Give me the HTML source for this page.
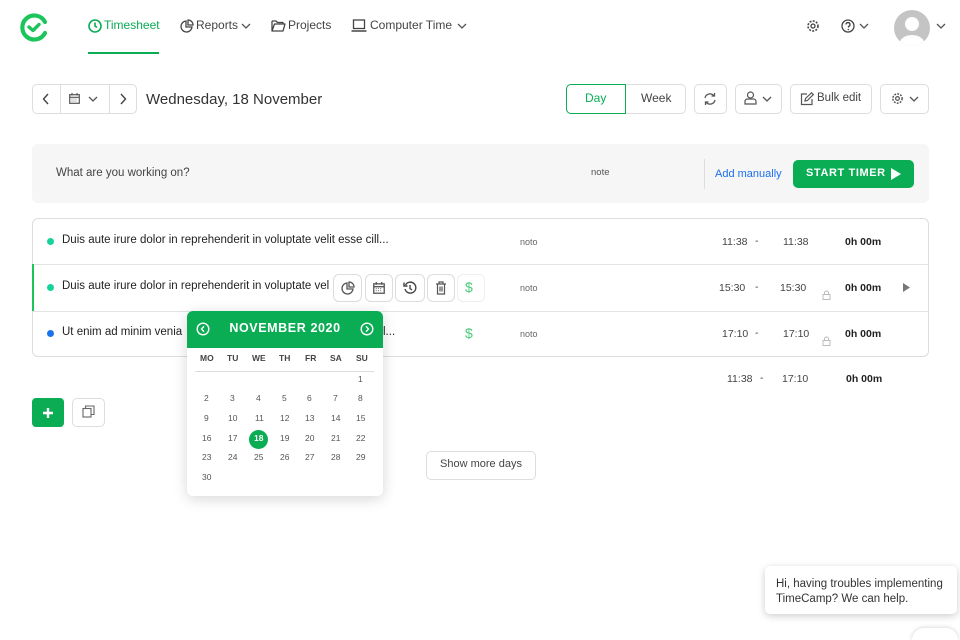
<!DOCTYPE html>
<html><head><meta charset="utf-8">
<style>
*{margin:0;padding:0;box-sizing:border-box}
html,body{width:960px;height:640px;overflow:hidden}
body{background:#fff;font-family:"Liberation Sans",sans-serif;color:#333;position:relative}
.a{position:absolute}
.t{position:absolute;white-space:nowrap;line-height:1.15}
.box{position:absolute;border:1px solid #ddd;border-radius:5px;background:#fff}
svg{position:absolute}
.g{color:#0aad54}
</style></head><body>

<svg style="left:18px;top:11px" width="32" height="32" viewBox="0 0 32 32"><path d="M27 11 A12 12 0 1 0 27 22" fill="none" stroke="#1cc559" stroke-width="4.2" stroke-linecap="round"/><path d="M11 16 l4 3.5 l6 -6" fill="none" stroke="#1cc559" stroke-width="3.4" stroke-linecap="round" stroke-linejoin="round"/></svg>

<svg style="left:88px;top:19px" width="14" height="14" viewBox="0 0 14 14"><circle cx="7" cy="7" r="6" fill="none" stroke="#0aad54" stroke-width="1.6"/><path d="M7 3.5V7l2 1.5" fill="none" stroke="#0aad54" stroke-width="1.6"/></svg>
<div class="t g" style="left:104px;top:19px;font-size:12px">Timesheet</div>
<div class="a" style="left:88px;top:52px;width:71px;height:2px;background:#0aad54"></div>

<svg style="left:180px;top:19px" width="14" height="14" viewBox="0 0 14 14"><path d="M6 2a5.5 5.5 0 1 0 6 6H6z" fill="none" stroke="#444" stroke-width="1.3"/><path d="M8 1v5h5A5 5 0 0 0 8 1z" fill="none" stroke="#444" stroke-width="1.3"/></svg>
<div class="t" style="left:196px;top:19px;font-size:12px;color:#444">Reports</div>
<svg style="left:241px;top:23px" width="10" height="7" viewBox="0 0 10 7"><path d="M1 1l4 4 4-4" fill="none" stroke="#555" stroke-width="1.3"/></svg>

<svg style="left:271px;top:20px" width="15" height="12" viewBox="0 0 15 12"><path d="M1 1h4l1.5 1.5H12V4M1 1v10h11l2-7H3.5L1 11" fill="none" stroke="#444" stroke-width="1.3" stroke-linejoin="round"/></svg>
<div class="t" style="left:288px;top:19px;font-size:12px;color:#444">Projects</div>

<svg style="left:351px;top:19px" width="16" height="14" viewBox="0 0 16 14"><rect x="2.5" y="1" width="11" height="8.5" fill="none" stroke="#444" stroke-width="1.3"/><path d="M0.5 12h15" stroke="#444" stroke-width="1.5"/></svg>
<div class="t" style="left:370px;top:19px;font-size:12px;color:#444">Computer Time</div>
<svg style="left:457px;top:23px" width="10" height="7" viewBox="0 0 10 7"><path d="M1 1l4 4 4-4" fill="none" stroke="#555" stroke-width="1.3"/></svg>

<svg style="left:806px;top:19px" width="14" height="14" viewBox="0 0 14 14"><circle cx="7" cy="7" r="2" fill="none" stroke="#444" stroke-width="1.3"/><circle cx="7" cy="7" r="5" fill="none" stroke="#444" stroke-width="1.6" stroke-dasharray="2 1.3"/></svg>
<svg style="left:841px;top:19px" width="14" height="14" viewBox="0 0 14 14"><circle cx="7" cy="7" r="6" fill="none" stroke="#444" stroke-width="1.3"/><path d="M5 5.5a2 2 0 1 1 2.5 2V8.5" fill="none" stroke="#444" stroke-width="1.3"/><circle cx="7.3" cy="10.5" r=".8" fill="#444"/></svg>
<svg style="left:859px;top:23px" width="10" height="7" viewBox="0 0 10 7"><path d="M1 1l4 4 4-4" fill="none" stroke="#555" stroke-width="1.3"/></svg>
<svg style="left:893px;top:9px" width="38" height="38" viewBox="0 0 38 38"><clipPath id="c"><circle cx="19" cy="19" r="18"/></clipPath><circle cx="19" cy="19" r="18" fill="#c4c4c4"/><g clip-path="url(#c)"><circle cx="19" cy="15" r="7" fill="#fff"/><ellipse cx="19" cy="36" rx="13" ry="10" fill="#fff"/></g></svg>
<svg style="left:936px;top:23px" width="10" height="7" viewBox="0 0 10 7"><path d="M1 1l4 4 4-4" fill="none" stroke="#555" stroke-width="1.3"/></svg>

<div class="box" style="left:32px;top:84px;width:105px;height:30px"></div>
<div class="a" style="left:60px;top:85px;width:1px;height:28px;background:#ddd"></div>
<div class="a" style="left:109px;top:85px;width:1px;height:28px;background:#ddd"></div>
<svg style="left:42px;top:93px" width="8" height="12" viewBox="0 0 8 12"><path d="M6 1L1.5 6 6 11" fill="none" stroke="#444" stroke-width="1.4"/></svg>
<svg style="left:119px;top:93px" width="8" height="12" viewBox="0 0 8 12"><path d="M2 1l4.5 5L2 11" fill="none" stroke="#444" stroke-width="1.4"/></svg>
<svg style="left:69px;top:93px" width="11" height="11" viewBox="0 0 11 11"><rect x=".7" y="1.7" width="9.6" height="8.6" fill="none" stroke="#555" stroke-width="1.2"/><path d="M.7 4.3h9.6M3 0v2.5M8 0v2.5" stroke="#555" stroke-width="1.2"/><path d="M2.5 6h6M2.5 8h6" stroke="#888" stroke-width="1" stroke-dasharray="1 1"/></svg>
<svg style="left:88px;top:96px" width="10" height="7" viewBox="0 0 10 7"><path d="M1 1l4 4 4-4" fill="none" stroke="#555" stroke-width="1.3"/></svg>
<div class="t" style="left:146px;top:91px;font-size:15px;color:#333">Wednesday, 18 November</div>

<div class="box" style="left:566px;top:84px;width:120px;height:30px"></div>
<div class="a" style="left:566px;top:84px;width:60px;height:30px;border:1px solid #0aad54;border-radius:5px 0 0 5px"></div>
<div class="t g" style="left:585px;top:92px;font-size:12px">Day</div>
<div class="t" style="left:641px;top:92px;font-size:12px;color:#444">Week</div>
<div class="box" style="left:694px;top:84px;width:33px;height:30px"></div>
<svg style="left:703px;top:92px" width="14" height="14" viewBox="0 0 14 14"><path d="M2 6a5 5 0 0 1 9-2M12 8a5 5 0 0 1-9 2" fill="none" stroke="#555" stroke-width="1.3"/><path d="M11.5 1v3h-3M2.5 13v-3h3" fill="none" stroke="#555" stroke-width="1.3"/></svg>
<div class="box" style="left:735px;top:84px;width:47px;height:30px"></div>
<svg style="left:744px;top:91px" width="13" height="14" viewBox="0 0 13 14"><circle cx="6.5" cy="4" r="3" fill="none" stroke="#555" stroke-width="1.2"/><path d="M1 13v-2.5a2.5 2.5 0 0 1 2.5-2.5h6a2.5 2.5 0 0 1 2.5 2.5V13z" fill="none" stroke="#555" stroke-width="1.2"/></svg>
<svg style="left:762px;top:96px" width="10" height="7" viewBox="0 0 10 7"><path d="M1 1l4 4 4-4" fill="none" stroke="#555" stroke-width="1.3"/></svg>
<div class="box" style="left:790px;top:84px;width:82px;height:30px"></div>
<svg style="left:800px;top:92px" width="14" height="14" viewBox="0 0 14 14"><path d="M7 2H1.5v10.5H12V7" fill="none" stroke="#555" stroke-width="1.2"/><path d="M5 9l.5-2.5L11.5.8l1.8 1.8-6 6z" fill="none" stroke="#555" stroke-width="1.2"/></svg>
<div class="t" style="left:817px;top:92px;font-size:11.5px;color:#444">Bulk edit</div>
<div class="box" style="left:880px;top:84px;width:49px;height:30px"></div>
<svg style="left:891px;top:92px" width="13" height="13" viewBox="0 0 14 14"><circle cx="7" cy="7" r="2" fill="none" stroke="#555" stroke-width="1.3"/><circle cx="7" cy="7" r="5" fill="none" stroke="#555" stroke-width="1.6" stroke-dasharray="2 1.3"/></svg>
<svg style="left:909px;top:96px" width="10" height="7" viewBox="0 0 10 7"><path d="M1 1l4 4 4-4" fill="none" stroke="#555" stroke-width="1.3"/></svg>

<div class="a" style="left:32px;top:144px;width:897px;height:59px;background:#f6f6f6;border-radius:6px"></div>
<div class="t" style="left:56px;top:167px;font-size:11.5px;color:#444">What are you working on?</div>
<div class="t" style="left:591px;top:168px;font-size:9.5px;color:#555">note</div>
<div class="a" style="left:704px;top:159px;width:1px;height:30px;background:#ddd"></div>
<div class="t" style="left:715px;top:168px;font-size:11px;color:#1a6ff0">Add manually</div>
<div class="a" style="left:793px;top:160px;width:121px;height:28px;background:#0aad54;border-radius:5px"></div>
<div class="t" style="left:806px;top:167px;font-size:11px;color:#fff;font-weight:bold;letter-spacing:.6px">START TIMER</div>
<svg style="left:890px;top:167px" width="12" height="14" viewBox="0 0 12 14"><path d="M1 1l10 6-10 6z" fill="#fff"/></svg>

<div class="box" style="left:32px;top:218px;width:897px;height:139px;border-radius:6px"></div>
<div class="a" style="left:33px;top:264px;width:895px;height:1px;background:#e3e3e3"></div>
<div class="a" style="left:33px;top:311px;width:895px;height:1px;background:#e3e3e3"></div>
<div class="a" style="left:32px;top:264px;width:2px;height:47px;background:#1cc559"></div>

<div class="a" style="left:47px;top:238px;width:7px;height:7px;border-radius:50%;background:#15d49a"></div>
<div class="t" style="left:62px;top:234px;font-size:11.5px;color:#222">Duis aute irure dolor in reprehenderit in voluptate velit esse cill...</div>
<div class="a" style="left:47px;top:284px;width:7px;height:7px;border-radius:50%;background:#15d49a"></div>
<div class="t" style="left:62px;top:280px;font-size:11.5px;color:#222;width:268px;overflow:hidden;height:16px">Duis aute irure dolor in reprehenderit in voluptate velit</div>
<div class="a" style="left:47px;top:330px;width:7px;height:7px;border-radius:50%;background:#1a73e8"></div>
<div class="t" style="left:62px;top:326px;font-size:11.5px;color:#222">Ut enim ad minim venia</div>
<div class="t" style="left:383px;top:326px;font-size:11.5px;color:#222">l...</div>
<div class="t" style="left:465px;top:325px;font-size:14px;color:#4cc97a">$</div>

<div class="t" style="left:520px;top:237px;font-size:9px;color:#666">noto</div>
<div class="t" style="left:520px;top:283px;font-size:9px;color:#666">noto</div>
<div class="t" style="left:520px;top:329px;font-size:9px;color:#666">noto</div>

<div class="t" style="left:722px;top:236px;font-size:10.5px;color:#444">11:38</div><div class="t" style="left:755px;top:235px;font-size:10.5px;color:#444">-</div><div class="t" style="left:783px;top:236px;font-size:10.5px;color:#444">11:38</div><div class="t" style="left:845px;top:236px;font-size:10.5px;color:#222;font-weight:bold">0h 00m</div>
<div class="t" style="left:719px;top:282px;font-size:10.5px;color:#444">15:30</div><div class="t" style="left:755px;top:281px;font-size:10.5px;color:#444">-</div><div class="t" style="left:780px;top:282px;font-size:10.5px;color:#444">15:30</div><div class="t" style="left:845px;top:282px;font-size:10.5px;color:#222;font-weight:bold">0h 00m</div>
<div class="t" style="left:722px;top:328px;font-size:10.5px;color:#444">17:10</div><div class="t" style="left:755px;top:327px;font-size:10.5px;color:#444">-</div><div class="t" style="left:783px;top:328px;font-size:10.5px;color:#444">17:10</div><div class="t" style="left:845px;top:328px;font-size:10.5px;color:#222;font-weight:bold">0h 00m</div>
<svg style="left:822px;top:290px" width="9" height="10" viewBox="0 0 9 10"><rect x="1" y="4.5" width="7" height="5" fill="none" stroke="#bbb"/><path d="M2.5 4.5V3a2 2 0 0 1 4 0v1.5" fill="none" stroke="#bbb"/></svg>
<svg style="left:822px;top:336px" width="9" height="10" viewBox="0 0 9 10"><rect x="1" y="4.5" width="7" height="5" fill="none" stroke="#bbb"/><path d="M2.5 4.5V3a2 2 0 0 1 4 0v1.5" fill="none" stroke="#bbb"/></svg>
<svg style="left:902px;top:282px" width="9" height="11" viewBox="0 0 9 11"><path d="M1 1l7 4.5L1 10z" fill="#777"/></svg>

<div class="t" style="left:727px;top:373px;font-size:10.5px;color:#444">11:38</div><div class="t" style="left:760px;top:372px;font-size:10.5px;color:#444">-</div><div class="t" style="left:782px;top:373px;font-size:10.5px;color:#444">17:10</div><div class="t" style="left:846px;top:373px;font-size:10.5px;color:#222;font-weight:bold">0h 00m</div>

<div class="box" style="left:333px;top:274px;width:29px;height:28px;border-radius:6px"></div>
<div class="box" style="left:365px;top:274px;width:28px;height:28px;border-radius:6px"></div>
<div class="box" style="left:395px;top:274px;width:30px;height:28px;border-radius:6px"></div>
<div class="box" style="left:427px;top:274px;width:28px;height:28px;border-radius:6px"></div>
<div class="box" style="left:457px;top:274px;width:28px;height:28px;border-radius:6px;border-color:#eee"></div>
<svg style="left:341px;top:281px" width="14" height="14" viewBox="0 0 14 14"><path d="M6 2a5.5 5.5 0 1 0 6 6H6z" fill="none" stroke="#555" stroke-width="1.3"/><path d="M8 1v5h5A5 5 0 0 0 8 1z" fill="none" stroke="#555" stroke-width="1.3"/></svg>
<svg style="left:373px;top:282px" width="12" height="12" viewBox="0 0 11 11"><rect x=".7" y="1.7" width="9.6" height="8.6" fill="none" stroke="#555" stroke-width="1.2"/><path d="M.7 4.3h9.6M3 0v2.5M8 0v2.5" stroke="#555" stroke-width="1.2"/><path d="M2.5 6h6M2.5 8h6" stroke="#888" stroke-width="1" stroke-dasharray="1 1"/></svg>
<svg style="left:403px;top:281px" width="14" height="14" viewBox="0 0 14 14"><path d="M2.5 4A5.5 5.5 0 1 1 2 8" fill="none" stroke="#444" stroke-width="1.4"/><path d="M1 1.5V5h3.5" fill="none" stroke="#444" stroke-width="1.4"/><path d="M7 4v3.5l2 1.5" fill="none" stroke="#444" stroke-width="1.4"/></svg>
<svg style="left:435px;top:281px" width="12" height="14" viewBox="0 0 12 14"><path d="M1 3h10M4 3V1h4v2M2.5 3v10h7V3M5 5.5v5M7 5.5v5" fill="none" stroke="#555" stroke-width="1.2"/></svg>
<div class="t" style="left:465px;top:279px;font-size:14px;color:#4cc97a">$</div>

<div class="a" style="left:32px;top:398px;width:32px;height:29px;background:#0aad54;border-radius:4px"></div>
<svg style="left:42px;top:407px" width="12" height="12" viewBox="0 0 12 12"><path d="M6 1v10M1 6h10" stroke="#fff" stroke-width="2.4"/></svg>
<div class="box" style="left:72px;top:398px;width:33px;height:29px;border-radius:5px"></div>
<svg style="left:82px;top:405px" width="13" height="13" viewBox="0 0 13 13"><rect x="1" y="3.5" width="8" height="8.5" fill="#fff" stroke="#666" stroke-width="1.1"/><path d="M3.5 3.5V1h8.5v8.5H9" fill="none" stroke="#666" stroke-width="1.1"/></svg>

<div class="box" style="left:426px;top:451px;width:110px;height:29px;border-radius:5px"></div>
<div class="t" style="left:426px;width:110px;text-align:center;top:458px;font-size:11px;color:#444">Show more days</div>

<div class="a" style="left:187px;top:311px;width:196px;height:185px;background:#fff;border-radius:6px;box-shadow:0 3px 14px rgba(0,0,0,.16);overflow:hidden">
 <div style="height:37px;background:#0aad54"></div>
</div>
<svg style="left:196px;top:322px" width="14" height="14" viewBox="0 0 14 14"><circle cx="7" cy="7" r="5.8" fill="none" stroke="#fff" stroke-width="1.4"/><path d="M8 4.3L5.5 7 8 9.7" fill="none" stroke="#fff" stroke-width="1.4"/></svg>
<svg style="left:360px;top:322px" width="14" height="14" viewBox="0 0 14 14"><circle cx="7" cy="7" r="5.8" fill="none" stroke="#fff" stroke-width="1.4"/><path d="M6 4.3L8.5 7 6 9.7" fill="none" stroke="#fff" stroke-width="1.4"/></svg>
<div class="t" style="left:187px;width:196px;text-align:center;top:321px;font-size:12.5px;color:#fff;font-weight:bold;letter-spacing:.6px">NOVEMBER 2020</div>
<div class="a" style="left:195px;top:371px;width:179px;height:1px;background:#ddd"></div>
<div class="a" style="left:249px;top:430px;width:19px;height:19px;border-radius:50%;background:#0aad54"></div>
<div style="position:absolute;left:0;top:0;font-size:8.5px;color:#555">
<div class="t" style="left:200px;top:354px;font-weight:bold;color:#444">MO</div><div class="t" style="left:227px;top:354px;font-weight:bold;color:#444">TU</div><div class="t" style="left:252px;top:354px;font-weight:bold;color:#444">WE</div><div class="t" style="left:279px;top:354px;font-weight:bold;color:#444">TH</div><div class="t" style="left:305px;top:354px;font-weight:bold;color:#444">FR</div><div class="t" style="left:330px;top:354px;font-weight:bold;color:#444">SA</div><div class="t" style="left:356px;top:354px;font-weight:bold;color:#444">SU</div>
<div class="t" style="left:358px;top:375px">1</div>
<div class="t" style="left:204px;top:394px">2</div><div class="t" style="left:230px;top:394px">3</div><div class="t" style="left:256px;top:394px">4</div><div class="t" style="left:282px;top:394px">5</div><div class="t" style="left:307px;top:394px">6</div><div class="t" style="left:333px;top:394px">7</div><div class="t" style="left:358px;top:394px">8</div>
<div class="t" style="left:204px;top:414px">9</div><div class="t" style="left:228px;top:414px">10</div><div class="t" style="left:255px;top:414px">11</div><div class="t" style="left:280px;top:414px">12</div><div class="t" style="left:305px;top:414px">13</div><div class="t" style="left:331px;top:414px">14</div><div class="t" style="left:356px;top:414px">15</div>
<div class="t" style="left:202px;top:434px">16</div><div class="t" style="left:228px;top:434px">17</div><div class="t" style="left:254px;top:434px;color:#fff;font-weight:bold">18</div><div class="t" style="left:280px;top:434px">19</div><div class="t" style="left:305px;top:434px">20</div><div class="t" style="left:331px;top:434px">21</div><div class="t" style="left:356px;top:434px">22</div>
<div class="t" style="left:202px;top:453px">23</div><div class="t" style="left:228px;top:453px">24</div><div class="t" style="left:254px;top:453px">25</div><div class="t" style="left:280px;top:453px">26</div><div class="t" style="left:305px;top:453px">27</div><div class="t" style="left:331px;top:453px">28</div><div class="t" style="left:356px;top:453px">29</div>
<div class="t" style="left:202px;top:473px">30</div>
</div>

<div class="a" style="left:765px;top:566px;width:192px;height:48px;background:#fff;border-radius:5px;box-shadow:0 2px 8px rgba(0,0,0,.2)"></div>
<div class="t" style="left:776px;top:577px;font-size:11.5px;color:#333;line-height:15px">Hi, having troubles implementing<br>TimeCamp? We can help.</div>
<div class="a" style="left:912px;top:628px;width:46px;height:12px;border-radius:23px 23px 0 0;background:#fff;box-shadow:0 0 5px rgba(0,0,0,.2)"></div>
</body></html>
